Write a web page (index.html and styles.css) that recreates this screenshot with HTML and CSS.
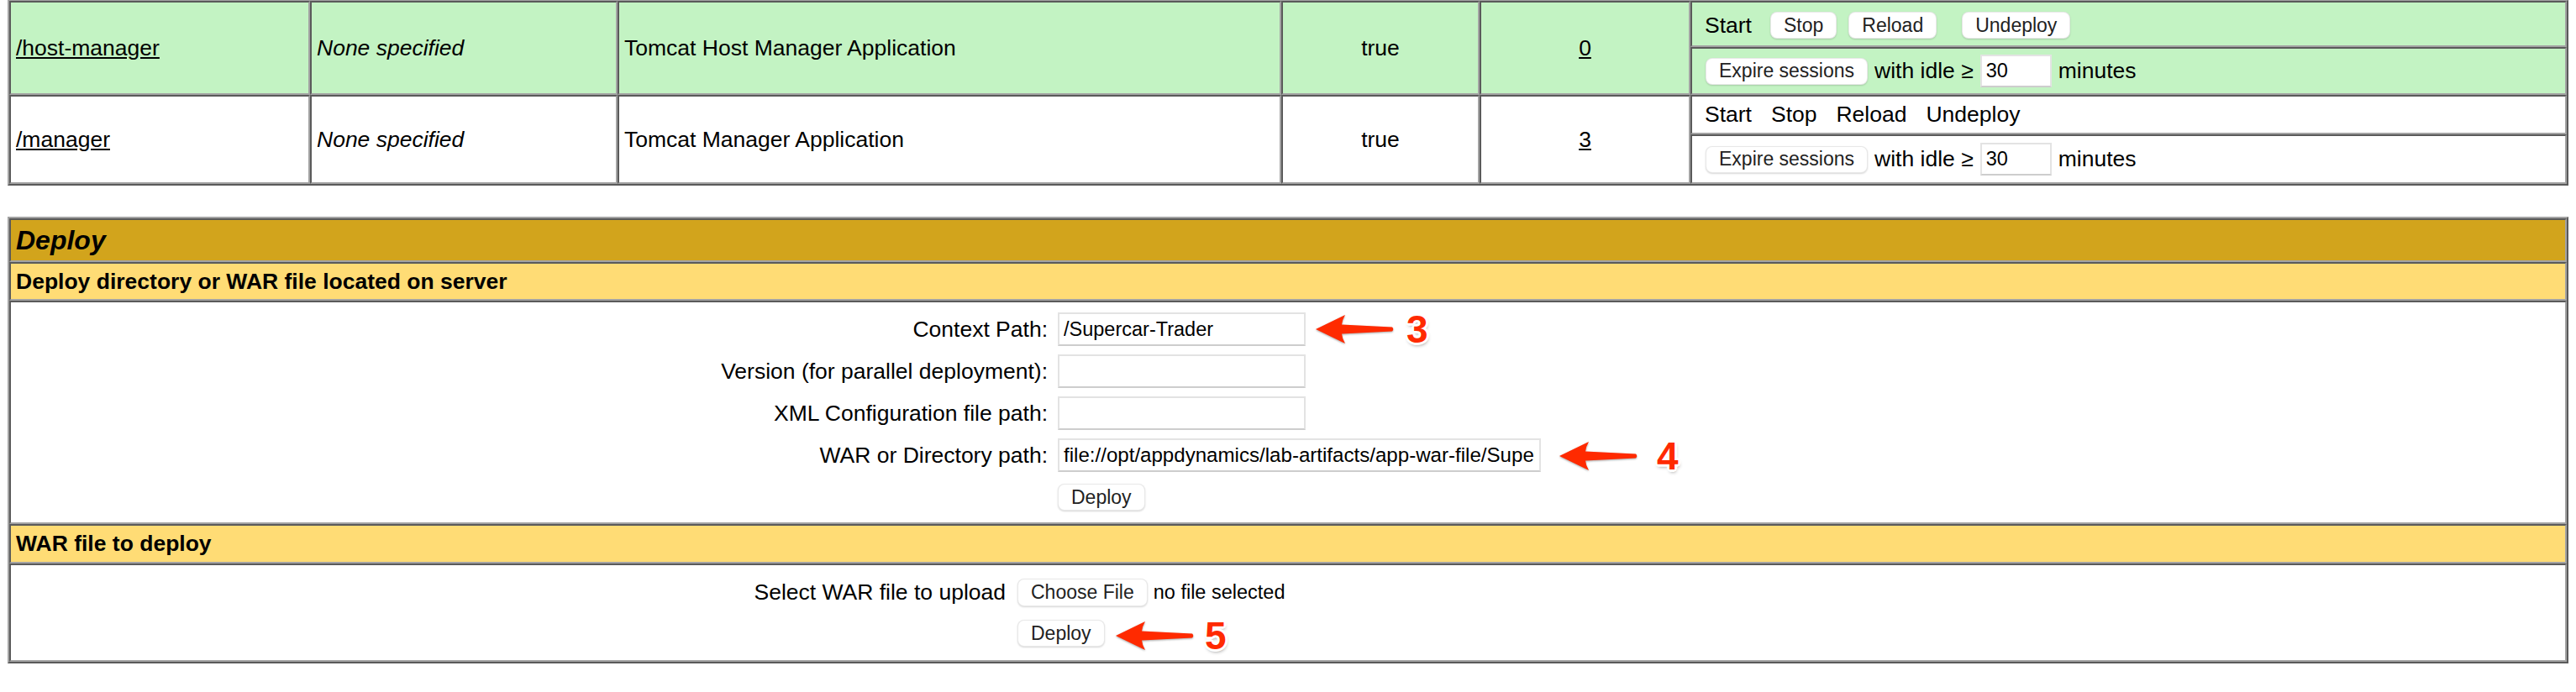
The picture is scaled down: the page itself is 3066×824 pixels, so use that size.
FILE: index.html
```html
<!DOCTYPE html>
<html lang="en">
<head>
<meta charset="utf-8">
<title>Tomcat Web Application Manager</title>
<link rel="stylesheet" href="styles.css">
</head>
<body>
<div class="page">
  <div class="grid-table apps">
    <div class="cell span2 hl"><a href="#">/host-manager</a></div>
    <div class="cell span2 hl"><i>None specified</i></div>
    <div class="cell span2 hl">Tomcat Host Manager Application</div>
    <div class="cell span2 hl center">true</div>
    <div class="cell span2 hl center"><a href="#">0</a></div>
    <div class="cell cmd hl cmd-top">
      <span>Start</span>
      <button class="btn m-stop">Stop</button>
      <button class="btn m-reload">Reload</button>
      <button class="btn m-undeploy">Undeploy</button>
    </div>
    <div class="cell cmd hl expire">
      <button class="btn">Expire sessions</button>
      <span>with idle ≥</span>
      <input class="field idle" type="text" value="30">
      <span>minutes</span>
    </div>

    <div class="cell span2"><a href="#">/manager</a></div>
    <div class="cell span2"><i>None specified</i></div>
    <div class="cell span2">Tomcat Manager Application</div>
    <div class="cell span2 center">true</div>
    <div class="cell span2 center"><a href="#">3</a></div>
    <div class="cell cmd cmd-plain">
      <span>Start</span>
      <span>Stop</span>
      <span>Reload</span>
      <span>Undeploy</span>
    </div>
    <div class="cell cmd expire">
      <button class="btn">Expire sessions</button>
      <span>with idle ≥</span>
      <input class="field idle" type="text" value="30">
      <span>minutes</span>
    </div>
  </div>

  <div class="grid-table deploy">
    <div class="cell title">Deploy</div>
    <div class="cell header">Deploy directory or WAR file located on server</div>
    <div class="cell body">
      <form class="form form-server">
        <label>Context Path:</label>
        <input class="field w20" type="text" value="/Supercar-Trader">
        <label>Version (for parallel deployment):</label>
        <input class="field w20" type="text" value="">
        <label>XML Configuration file path:</label>
        <input class="field w20" type="text" value="">
        <label>WAR or Directory path:</label>
        <input class="field w40" type="text" value="file://opt/appdynamics/lab-artifacts/app-war-file/Supercar-Trader.war">
        <span></span>
        <button class="btn" type="button">Deploy</button>
      </form>
    </div>
    <div class="cell header">WAR file to deploy</div>
    <div class="cell body">
      <form class="form form-upload">
        <label>Select WAR file to upload</label>
        <div class="file">
          <button class="btn" type="button">Choose File</button>
          <span class="file-name">no file selected</span>
        </div>
        <span></span>
        <button class="btn" type="button">Deploy</button>
      </form>
    </div>
  </div>

  <div class="callout c3">
    <svg class="arrow" viewBox="0 0 96 40" width="96" height="40"><path d="M2 20 L37 3 Q33.5 9 33 14.6 L93 17.6 Q95.5 20 93 22.6 L33 25.4 Q33.5 31 37 37 Z"/></svg>
    <span class="num">3</span>
  </div>
  <div class="callout c4">
    <svg class="arrow" viewBox="0 0 96 40" width="96" height="40"><path d="M2 20 L37 3 Q33.5 9 33 14.6 L93 17.6 Q95.5 20 93 22.6 L33 25.4 Q33.5 31 37 37 Z"/></svg>
    <span class="num">4</span>
  </div>
  <div class="callout c5">
    <svg class="arrow" viewBox="0 0 96 40" width="96" height="40"><path d="M2 20 L37 3 Q33.5 9 33 14.6 L93 17.6 Q95.5 20 93 22.6 L33 25.4 Q33.5 31 37 37 Z"/></svg>
    <span class="num">5</span>
  </div>
</div>
</body>
</html>
```

FILE: styles.css
```css
* { box-sizing: border-box; }
html, body { margin: 0; padding: 0; background: #fff; }
body {
  font-family: "Liberation Sans", Arial, Helvetica, sans-serif;
  font-size: 26.5px;
  color: #000;
}
a { color: #000; text-decoration: underline; }

.page {
  position: relative;
  width: 3066px;
  padding: 0 9px;
}

.grid-table {
  width: 3048px;
  display: grid;
  border-style: solid;
  border-width: 2px;
  border-color: #a3a3a3 #5a5a5a #5a5a5a #a3a3a3;
}

.apps {
  border-top-width: 1px;
  grid-template-columns: 358px 366px 790px 236px 251px 1043px;
  grid-template-rows: 55px 57px 47px 59px;
}

.cell {
  border: 2px solid;
  border-color: #5a5a5a #a3a3a3 #a3a3a3 #5a5a5a;
  padding: 0 6px;
  display: flex;
  align-items: center;
  min-width: 0;
  white-space: nowrap;
}
.span2 { grid-row: span 2; }
.center { justify-content: center; }
.hl { background: #c3f3c3; }

.btn {
  height: 32px;
  padding: 0 15px;
  font-family: "Liberation Sans", Arial, Helvetica, sans-serif;
  font-size: 23px;
  color: #222;
  background: #fff;
  border: 1px solid rgba(0, 0, 0, 0.09);
  border-radius: 8px;
  box-shadow: 0 1px 2px rgba(0, 0, 0, 0.16);
  margin: 0;
  white-space: nowrap;
}

.cmd { padding-left: 15px; }
.cmd-top { padding-top: 3px; }
.cmd .m-stop { margin-left: 22px; }
.cmd .m-reload { margin-left: 14px; }
.cmd .m-undeploy { margin-left: 30px; }
.cmd-plain { gap: 23px; }
.expire { gap: 8px; padding-left: 16px; }

.field {
  height: 40px;
  margin: 0;
  padding: 0 5px;
  font-family: "Liberation Sans", Arial, Helvetica, sans-serif;
  font-size: 23.5px;
  color: #000;
  background: #fff;
  border: 2px solid #e3e3e3;
  border-bottom-color: #cdcdcd;
  border-radius: 0;
  outline: none;
}
.idle { width: 85px; height: 39px; }
.w20 { width: 295px; }
.w40 { width: 575px; font-size: 24.1px; }

.deploy {
  margin-top: 37px;
  grid-template-rows: 52px 46px 266px 47px 117px;
}
.title {
  background: #d2a41c;
  font-size: 32px;
  font-weight: bold;
  font-style: italic;
}
.header {
  background: #ffdc75;
  font-weight: bold;
}
.body {
  padding: 0;
  align-items: flex-start;
}

.form {
  display: grid;
  grid-auto-rows: 40px;
  align-items: center;
  justify-items: start;
  margin: 0;
}
.form label { justify-self: end; }
.form-server {
  grid-template-columns: 1234px auto;
  column-gap: 12px;
  row-gap: 10px;
  padding-top: 12px;
}
.form-upload {
  grid-template-columns: 1184px auto;
  column-gap: 14px;
  row-gap: 9px;
  padding-top: 12px;
}
.file {
  display: flex;
  align-items: center;
  gap: 7px;
}
.file .btn { height: 33px; }
.file-name { font-size: 23.5px; }

.callout {
  position: absolute;
  display: flex;
  align-items: center;
  gap: 14px;
}
.c3 { left: 1564px; top: 369px; }
.c4 { left: 1854px; top: 520px; gap: 22px; }
.c5 { left: 1326px; top: 734px; gap: 12px; }
.arrow {
  display: block;
  fill: #ff2a00;
  filter: drop-shadow(0 1px 1px rgba(0, 0, 0, 0.35));
}
.num {
  font-family: "Liberation Sans", Arial, Helvetica, sans-serif;
  font-size: 46px;
  line-height: 46px;
  font-weight: bold;
  color: #ff2a00;
  text-shadow:
    -3px 0 #fff, 3px 0 #fff, 0 -3px #fff, 0 3px #fff,
    -2px -2px #fff, 2px -2px #fff, -2px 2px #fff, 2px 2px #fff,
    1px 3px 4px rgba(0, 0, 0, 0.45);
}
```
